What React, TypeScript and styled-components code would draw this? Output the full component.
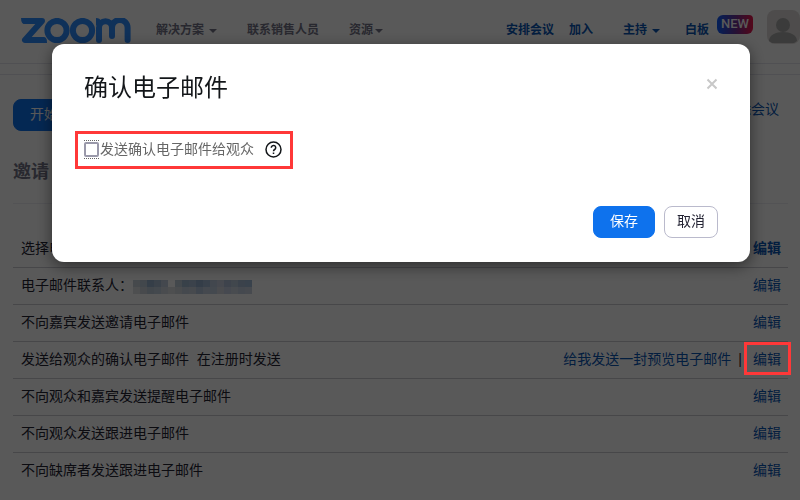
import React from "react";
import styled, { createGlobalStyle } from "styled-components";

const Global = createGlobalStyle`
  * { box-sizing: border-box; }
  body { margin: 0; background: #fff; font: 14px/20px "Liberation Sans", "Noto Sans CJK SC", sans-serif; color: #232333; overflow: hidden; }
  button, input { font: inherit; }
  a { text-decoration: none; }
`;

const Page = styled.div`
  height: 100vh;
  overflow: hidden;
`;
const Header = styled.header`
  display: flex;
  height: 64px;
  padding: 10px 0 0 20px;
  border-bottom: 1px solid #e4e4ed;
`;
const Brand = styled.a`
  display: block;
  height: 26px;
  margin: 8px 24px 0 0;
`;
const Nav = styled.nav<{ $end?: boolean }>`
  display: flex;
  gap: 30px;
  height: 20px;
  margin: 10px 0 0 ${(p) => (p.$end ? "auto" : "0")};
`;
const NavGroup = styled.div<{ $gap: number }>`
  display: flex;
  gap: ${(p) => p.$gap}px;
`;
const NavLink = styled.a<{ $blue?: boolean; $tight?: boolean }>`
  display: flex;
  align-items: center;
  gap: ${(p) => (p.$tight ? 2 : 5)}px;
  font-size: 12px;
  font-weight: 700;
  white-space: nowrap;
  color: ${(p) => (p.$blue ? "#0956b5" : "#747487")};
`;
const Caret = styled.span`
  margin-top: 2px;
  border: 4px solid transparent;
  border-top-color: currentColor;
  border-bottom: 0;
`;
const NewTag = styled.span`
  height: 19px;
  margin: 5px 14px 0 8px;
  padding: 0 4px;
  border-radius: 6px 4px 6px 6px;
  background: linear-gradient(90deg, #0b5cff, #663399 50%, #f0154a);
  color: #fff;
  font: 500 13px/17px Roboto, sans-serif;
`;
const Avatar = styled.svg`
  display: block;
  flex: none;
`;
const Divider = styled.div`
  height: 11px;
  border-bottom: 1px solid #e4e4ed;
`;
const Main = styled.main`
  padding: 24px 12px 0 13px;
`;
const Toolbar = styled.div`
  display: flex;
  align-items: flex-start;
  justify-content: space-between;
  height: 32px;
  padding-right: 9px;
`;
const Button = styled.button<{ $primary?: boolean }>`
  height: 32px;
  padding: 0 ${(p) => (p.$primary ? 16 : 12)}px 2px;
  border: 1px solid ${(p) => (p.$primary ? "#0e72ed" : "#babacc")};
  border-radius: 8px;
  background: ${(p) => (p.$primary ? "#0e72ed" : "#fff")};
  color: ${(p) => (p.$primary ? "#fff" : "#232333")};
  white-space: nowrap;
`;
const TextLink = styled.a<{ $bold?: boolean }>`
  color: #0956b5;
  font-weight: ${(p) => (p.$bold ? 700 : 400)};
`;
const Heading = styled.h2`
  margin: 28px 0 18px;
  font-size: 18px;
  line-height: 26px;
  color: #747487;
`;
const List = styled.ul`
  list-style: none;
  margin: 0;
  padding: 27px 0 0;
  border-top: 1px solid #ededf4;
`;
const Row = styled.li`
  display: flex;
  align-items: center;
  height: 37px;
  padding: 0 7px 2px 8px;
  border-bottom: 1px solid #cacad2;
  &:last-child { border-bottom-color: transparent; }
`;
const Actions = styled.div`
  display: flex;
  gap: 7px;
  margin-left: auto;
`;
const EditLink = styled(TextLink)`
  position: relative;
  margin-left: 4px;
`;
const Frame = styled.span`
  position: absolute;
  z-index: 2;
  inset: -7px -10px -6px -9px;
  border: 3px solid #ff3838;
  pointer-events: none;
`;
const Mosaic = styled.svg`
  margin-top: 3px;
  opacity: 0.8;
`;
const Overlay = styled.div`
  position: fixed;
  z-index: 1;
  inset: 0;
  display: flex;
  align-items: flex-start;
  padding: 44px 50px 0 52px;
  background: rgba(0, 0, 0, 0.65);
`;
const Dialog = styled.section`
  flex: 1;
  padding: 28px 32px 24px;
  border-radius: 12px;
  background: #fff;
  box-shadow: 0 4px 16px rgba(0, 0, 0, 0.5);
`;
const DialogHead = styled.div`
  display: flex;
  justify-content: space-between;
  align-items: center;
  height: 32px;
`;
const Title = styled.h1`
  margin: 0;
  font-size: 24px;
  line-height: 32px;
  font-weight: 400;
  color: #131619;
`;
const Close = styled.button`
  display: flex;
  padding: 0;
  margin-top: -8px;
  border: 0;
  background: none;
`;
const Marked = styled.div`
  display: flex;
  align-items: center;
  width: fit-content;
  height: 38px;
  margin: 27px 0 0 -9px;
  padding: 0 8px 2px 6px;
  border: 3px solid #ff3838;
`;
const Check = styled.label`
  display: flex;
  align-items: center;
  gap: 1px;
  margin-right: 11px;
  color: #666;
`;
const BoxFocus = styled.span`
  display: flex;
  padding: 1px 0;
  border: dotted #666;
  border-width: 1px 0;
`;
const Box = styled.input`
  appearance: none;
  width: 15px;
  height: 15px;
  margin: 0;
  border: 2px solid #9a99aa;
  border-radius: 2px;
  outline: none;
`;
const HelpIcon = styled.svg`
  display: block;
`;
const Footer = styled.div`
  display: flex;
  justify-content: flex-end;
  gap: 9px;
  margin-top: 37px;
`;

const mosaicRows = [
  ["#bcc7d3", "#aebfd0", "#7e9ec4", "#94aecb", "#b3c4d6", "", "#b1c1d0", "#8ba9c8", "#93aecc", "#7b9cc1", "#8eabcf", "#acbfd8", "#bfc8dc", "#9eb2d1", "#abc0d5", "#93aece", "#8dadd0"],
  ["#d7dae0", "#c4cad4", "#aebfd2", "#b6c6d7", "#cbd3dc", "#d9dbdf", "#cad0d7", "#bac8d6", "#bec9d6", "#a5bad4", "#b7c7dc", "#b6c5da", "#ccd2dd", "#bbc8df", "#c6d0df", "#b9c7dd", "#bdcbdd"],
];
const rows = [
  "选择电子邮件语言",
  "电子邮件联系人：",
  "不向嘉宾发送邀请电子邮件",
  "发送给观众的确认电子邮件\u00a0 在注册时发送",
  "不向观众和嘉宾发送提醒电子邮件",
  "不向观众发送跟进电子邮件",
  "不向缺席者发送跟进电子邮件",
];

function Logo() {
  return (
    <svg width="112" height="26" viewBox="0 0 112 26" fill="none" stroke="#2d8cff" strokeWidth="6" strokeLinecap="round" strokeLinejoin="round" role="img" aria-label="zoom">
      <path d="M5 3H22L5 22H23.5" />
      <path d="M1 0h6v6H5q-4 0-4-6z" fill="#2d8cff" stroke="none" />
      <path d="M27 25v-1q0-5-6-5v6z" fill="#2d8cff" stroke="none" />
      <circle cx="37" cy="12.5" r="9.6" />
      <circle cx="62.5" cy="12.5" r="9.6" />
      <path d="M79 22V9.7a6.5 6.5 0 0 1 13 0V18M92 9.7a7.8 7.8 0 0 1 15.6 0V22" />
      <path d="M76 0q4 0 5 3l-5 5z" fill="#2d8cff" stroke="none" />
    </svg>
  );
}

export default function App() {
  return (
    <>
      <Global />
      <Page>
        <Header>
          <Brand href="#"><Logo /></Brand>
          <Nav>
            <NavLink href="#">解决方案<Caret /></NavLink>
            <NavLink href="#">联系销售人员</NavLink>
            <NavLink $tight href="#">资源<Caret /></NavLink>
          </Nav>
          <Nav $end>
            <NavGroup $gap={15}>
              <NavLink $blue href="#">安排会议</NavLink>
              <NavLink $blue href="#">加入</NavLink>
            </NavGroup>
            <NavGroup $gap={25}>
              <NavLink $blue href="#">主持<Caret /></NavLink>
              <NavLink $blue href="#">白板</NavLink>
            </NavGroup>
          </Nav>
          <NewTag>NEW</NewTag>
          <Avatar width="33" height="34" viewBox="0 0 33 34" aria-hidden="true">
            <rect width="33" height="34" rx="8" fill="#dedbd9" />
            <circle cx="16" cy="15" r="7" fill="#a9a9a9" />
            <path d="M2 31c0-6 7-9 14-9s14 3 14 9l-3 2H5z" fill="#a9a9a9" />
          </Avatar>
        </Header>
        <Divider />
        <Main>
          <Toolbar>
            <Button $primary>开始此会议</Button>
            <TextLink href="#">删除会议</TextLink>
          </Toolbar>
          <Heading>邀请</Heading>
          <List>
            {rows.map((text, i) => (
              <Row key={text}>
                <span>{text}</span>
                {i === 1 && (
                  <Mosaic width="119" height="14" aria-hidden="true">
                    {mosaicRows.map((line, y) => line.map((c, x) => c && <rect key={`${x}-${y}`} x={x * 7} y={y * 7} width="7" height="7" fill={c} />))}
                  </Mosaic>
                )}
                <Actions>
                  {i === 3 && <><TextLink href="#">给我发送一封预览电子邮件</TextLink><span>|</span></>}
                  <EditLink href="#" $bold={i === 0}>编辑{i === 3 && <Frame />}</EditLink>
                </Actions>
              </Row>
            ))}
          </List>
        </Main>
      </Page>
      <Overlay>
        <Dialog role="dialog" aria-labelledby="title">
          <DialogHead>
            <Title id="title">确认电子邮件</Title>
            <Close aria-label="关闭">
              <svg width="12" height="12" viewBox="0 0 12 12" stroke="#c8c8c8" strokeWidth="2"><path d="M1.5 1.5l9 9M10.5 1.5l-9 9" /></svg>
            </Close>
          </DialogHead>
          <Marked>
            <Check><BoxFocus><Box type="checkbox" /></BoxFocus>发送确认电子邮件给观众</Check>
            <HelpIcon width="17" height="17" viewBox="0 0 17 17" fill="none" stroke="#131619" strokeWidth="1.5" aria-hidden="true">
              <circle cx="8.5" cy="8.5" r="7.5" />
              <path d="M6.3 6.7a2.2 2.2 0 1 1 3.4 1.8C8.8 9.1 8.5 9.4 8.5 10.3M8.5 11.5v1.5" />
            </HelpIcon>
          </Marked>
          <Footer>
            <Button $primary>保存</Button>
            <Button>取消</Button>
          </Footer>
        </Dialog>
      </Overlay>
    </>
  );
}
